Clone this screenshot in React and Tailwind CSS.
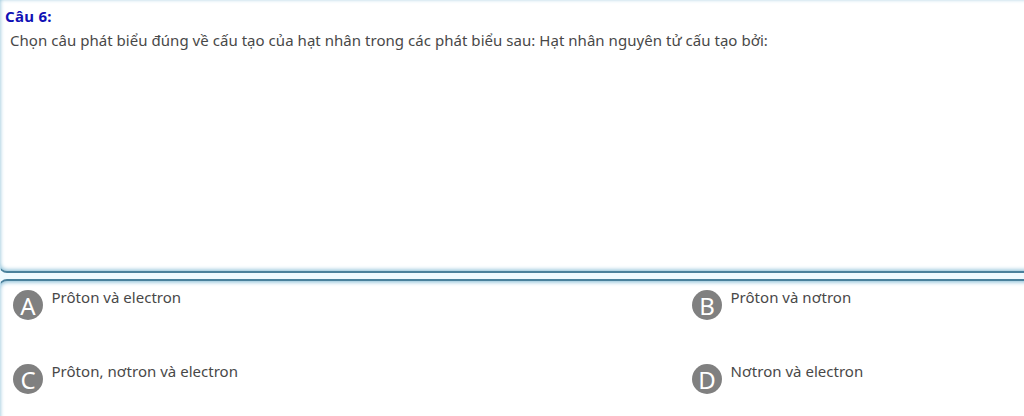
const answers = [
  { key: 'A', text: 'Prôton và electron' },
  { key: 'B', text: 'Prôton và nơtron' },
  { key: 'C', text: 'Prôton, nơtron và electron' },
  { key: 'D', text: 'Nơtron và electron' },
];

const Answer = ({ label, text }) => (
  <div className="flex h-[74px] items-start gap-[8.5px]">
    <span className="flex size-[30px] shrink-0 items-center justify-center rounded-full bg-[#808080] pt-0.5 text-2xl leading-none text-white">
      {label}
    </span>
    <span className="-mt-[5px] whitespace-nowrap text-[15px] leading-6 tracking-[0.02px]">{text}</span>
  </div>
);

const App = () => {
  return (
    <div className="h-[416px] w-full overflow-hidden bg-[#effaff] font-['Noto_Sans','Open_Sans',sans-serif] text-[#484848]">
      {/* Question */}
      <div className="-ml-px -mr-5 h-[273px] rounded-b-lg border border-t-0 border-b-2 border-[#a9d3e6] border-b-[#4a819c] bg-white pl-[5px] pt-1 shadow-[inset_0_-1px_4px_#7fb9d3]">
        <h2 className="text-[15px] font-bold leading-6 tracking-[0.3px] text-[#1111b5]">Câu 6:</h2>
        <p className="ml-[5px] whitespace-nowrap text-[15px] leading-6 tracking-[0.04px]">
          Chọn câu phát biểu đúng về cấu tạo của hạt nhân trong các phát biểu sau: Hạt nhân nguyên tử cấu tạo bởi:
        </p>
      </div>

      {/* Answers */}
      <div className="-ml-px -mr-5 mt-1.5 h-[160px] rounded-t-lg border border-b-0 border-t-2 border-[#a9d3e6] border-t-[#4a819c] bg-white pl-[13px] pt-[9px] shadow-[inset_0_1px_4px_#7fb9d3]">
        <div className="grid grid-cols-[679px_1fr]">
          {answers.map((a) => (
            <Answer key={a.key} label={a.key} text={a.text} />
          ))}
        </div>
      </div>
    </div>
  );
};

export default App;
